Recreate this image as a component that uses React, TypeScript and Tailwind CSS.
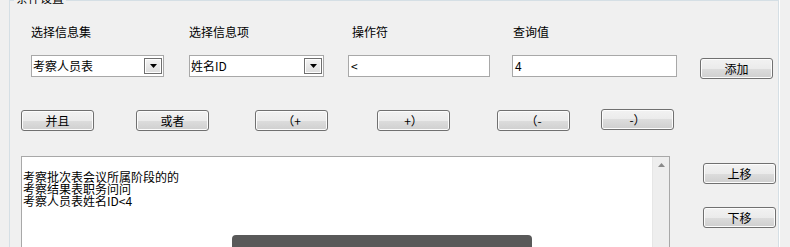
import React from "react";

const btn =
  "h-[21px] w-[73px] rounded-[3px] border border-[#707070] bg-[linear-gradient(#f2f2f2_0%,#ebebeb_50%,#dddddd_50%,#cfcfcf_100%)] shadow-[inset_0_0_0_1px_#fcfcfc] text-[12px] leading-[12px] text-black flex items-center justify-center";

function Combo({ text, w }: { text: string; w: string }) {
  return (
    <div className={`${w} h-[22px] border border-[#a8a8a8] bg-white flex items-center justify-between pl-[1px] pr-[1px]`}>
      <span className="text-[12px] leading-[12px]">{text}</span>
      <div className="w-[18px] h-[16px] border border-[#6f6f6f] bg-[linear-gradient(#f4f4f4,#dcdcdc)] shadow-[inset_0_0_0_1px_#ffffff] flex items-center justify-center">
        <svg width="7" height="4" viewBox="0 0 7 4">
          <path d="M0 0H7L3.5 4Z" fill="#000" />
        </svg>
      </div>
    </div>
  );
}

export default function App() {
  return (
    <div
      className="relative w-[790px] h-[247px] overflow-hidden bg-[#f0f0f0] text-black"
      style={{ fontFamily: '"Noto Sans CJK SC", "Noto Sans", sans-serif' }}
    >
      <div className="relative ml-[9px] w-[770px] h-[260px] border border-[#d5dfe5] shadow-[1px_0_0_#ffffff]">
        <span className="absolute left-[4px] top-[-9px] bg-[#f0f0f0] px-[2px] text-[12px] leading-[12px]">
          条件设置
        </span>

        <div className="flex flex-col pt-[25px]">
          {/* labels */}
          <div className="flex text-[12px] leading-[12px] pl-[21px]">
            <span className="w-[158px]">选择信息集</span>
            <span className="w-[163px]">选择信息项</span>
            <span className="w-[161px]">操作符</span>
            <span>查询值</span>
          </div>

          {/* inputs */}
          <div className="flex items-start pl-[21px] mt-[17px]">
            <Combo text="考察人员表" w="w-[133px]" />
            <div className="ml-[25px]">
              <Combo text="姓名ID" w="w-[135px]" />
            </div>
            <div className="ml-[24px] w-[142px] h-[22px] border border-[#a8a8a8] bg-white flex items-center pl-[2px] text-[12px] leading-[12px]">
              &lt;
            </div>
            <div className="ml-[22px] w-[165px] h-[22px] border border-[#a8a8a8] bg-white flex items-center pl-[2px] text-[12px] leading-[12px]">
              4
            </div>
            <button className={`${btn} ml-[23px] mt-[3px] border-[#3c7fb1] shadow-[inset_0_0_0_1px_#7ccdf4]`}>
              添加
            </button>
          </div>

          {/* operator buttons */}
          <div className="flex items-start pl-[11px] mt-[31px]">
            <button className={btn}>并且</button>
            <button className={`${btn} ml-[42px]`}>或者</button>
            <button className={`${btn} ml-[46px]`}>（+</button>
            <button className={`${btn} ml-[49px]`}>+）</button>
            <button className={`${btn} ml-[47px]`}>（-</button>
            <button className={`${btn} ml-[31px] -mt-[1px]`}>-）</button>
          </div>

          {/* list + move buttons */}
          <div className="flex items-start pl-[11px] mt-[25px]">
            <div className="w-[649px] h-[110px] border border-[#a8a8a8] bg-white flex">
              <div className="flex-1 pt-[14px] pl-[1px] text-[12px] leading-[12px]">
                <div>考察批次表会议所属阶段的的</div>
                <div>考察结果表职务问问</div>
                <div>考察人员表姓名ID&lt;4</div>
              </div>
              <div className="w-[17px] h-full bg-[#eeeeee] border-l border-[#e6e6e6] flex justify-center pt-[6px]">
                <svg width="7" height="4" viewBox="0 0 7 4">
                  <path d="M3.5 0L7 4H0Z" fill="#8a8a8a" />
                </svg>
              </div>
            </div>
            <div className="flex flex-col ml-[33px] mt-[7px]">
              <button className={btn}>上移</button>
              <button className={`${btn} mt-[23px]`}>下移</button>
            </div>
          </div>
        </div>
      </div>

      <div className="absolute left-[232px] top-[235px] w-[300px] h-[20px] rounded-t-[4px] bg-[#595959]" />
    </div>
  );
}
